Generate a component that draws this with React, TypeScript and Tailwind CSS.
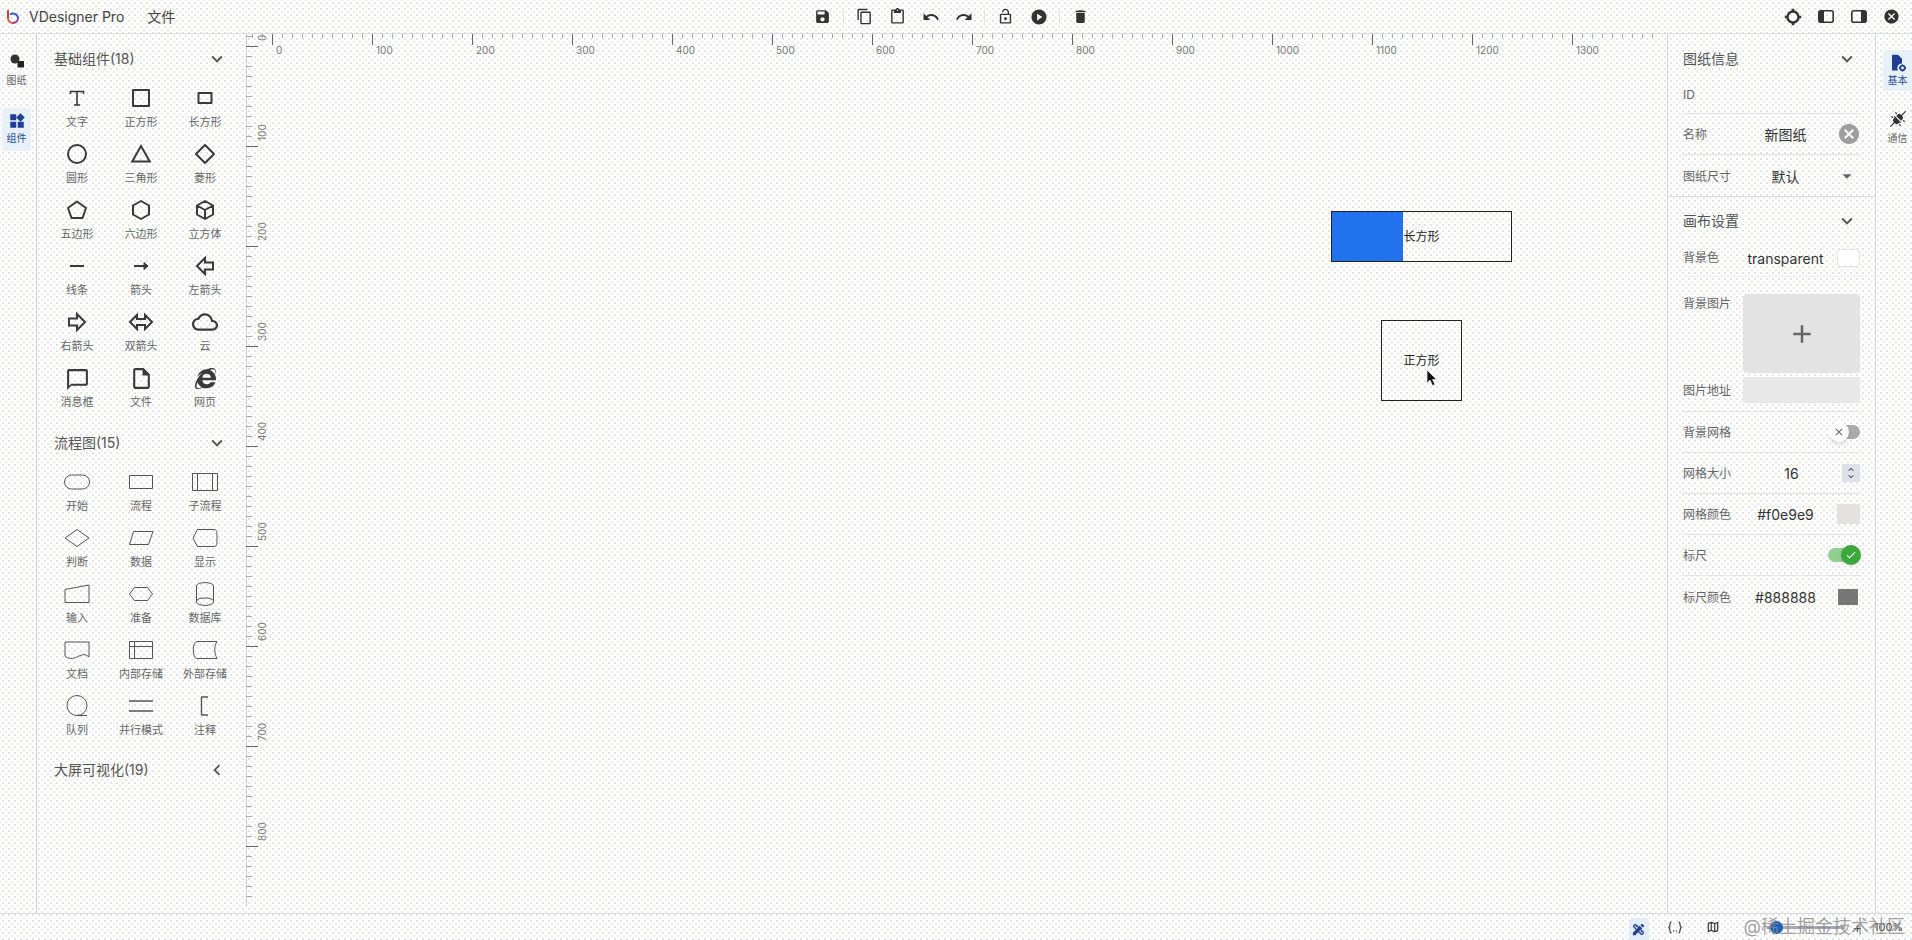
import React from "react";
import { MdSave, MdContentCopy, MdContentPaste, MdUndo, MdRedo, MdLockOpen, MdPlayCircle, MdDelete, MdExpandMore, MdChevronLeft, MdCancel, MdArrowDropDown, MdAdd, MdWidgets, MdCloudQueue, MdChatBubbleOutline, MdOutlineInsertDriveFile, MdDesignServices, MdOutlineMap, MdClose, MdCheck, MdKeyboardArrowUp, MdKeyboardArrowDown } from "react-icons/md";
import { FaInternetExplorer } from "react-icons/fa";
import { PiPlugsConnectedFill } from "react-icons/pi";

const S = ({ children, w = 28, sw = 2, stroke = "#3a3a3a" }: { children: React.ReactNode; w?: number; sw?: number; stroke?: string }) => (
  <svg width={w} height={28} viewBox={`0 0 ${w} 28`} fill="none" stroke={stroke} strokeWidth={sw} strokeLinejoin="round">{children}</svg>
);

const basic: [string, React.ReactNode][] = [
  ["文字", <S sw={1.6}><path d="M7.5 10V7.5h13V10M14 7.5v13.5M11 21h6" strokeLinejoin="miter" /></S>],
  ["正方形", <S><rect x="6" y="6" width="16" height="16" /></S>],
  ["长方形", <S><rect x="7.5" y="9" width="13" height="10" /></S>],
  ["圆形", <S><circle cx="14" cy="14" r="9" /></S>],
  ["三角形", <S><path d="M14 6 22.8 21.5H5.2Z" strokeLinejoin="miter" /></S>],
  ["菱形", <S><path d="M14 5 23 14 14 23 5 14Z" /></S>],
  ["五边形", <S><path d="M14 5.5 23 12 19.5 22H8.500L5 12Z" /></S>],
  ["六边形", <S><path d="M14 5 22 9.500V18.500L14 23 6 18.500V9.500Z" /></S>],
  ["立方体", <S><path d="M14 5 22 9.500V18.500L14 23 6 18.500V9.500ZM14 14 6 9.500M14 14 22 9.500M14 14V23" /></S>],
  ["线条", <S><path d="M7 14H21" /></S>],
  ["箭头", <S><path d="M7 14H19" /><path d="M17 10.500 21 14 17 17.500Z" fill="#3a3a3a" strokeWidth={1} /></S>],
  ["左箭头", <S><path d="M6 14 14 6V10.500H22V17.500H14V22Z" strokeLinejoin="miter" /></S>],
  ["右箭头", <S><path d="M22 14 14 6V10.500H6V17.500H14V22Z" strokeLinejoin="miter" /></S>],
  ["双箭头", <S><path d="M3 14 10 7V11H18V7L25 14 18 21V17H10V21Z" strokeLinejoin="miter" /></S>],
  ["云", <MdCloudQueue size={26} color="#3a3a3a" />],
  ["消息框", <MdChatBubbleOutline size={25} color="#3a3a3a" className="mt-[3px]" />],
  ["文件", <MdOutlineInsertDriveFile size={25} color="#3a3a3a" />],
  ["网页", <FaInternetExplorer size={21} color="#3a3a3a" />],
];

const T = ({ children }: { children: React.ReactNode }) => <S w={30} sw={1} stroke="#555">{children}</S>;
const flow: [string, React.ReactNode][] = [
  ["开始", <T><rect x="2.500" y="7" width="25" height="14" rx="7" /></T>],
  ["流程", <T><rect x="3.500" y="7.500" width="23" height="13" /></T>],
  ["子流程", <T><path d="M2.500 5.500h25v17h-25zM7.500 5.500v17M22.500 5.500v17" /></T>],
  ["判断", <T><path d="M3 14 15 5.500 27 14 15 22.500Z" /></T>],
  ["数据", <T><path d="M7.500 7.500H27L22.500 20.500H3.500Z" /></T>],
  ["显示", <T><path d="M7.500 5.500H24C27 5.500 27 8 27 14S27 22.500 24 22.500H7.500L3 14Z" /></T>],
  ["输入", <T><path d="M3 9.500 27 5V22.500H3Z" /></T>],
  ["准备", <T><path d="M3.500 14 8.500 7.500H21.500L26.500 14 21.500 20.500H8.500Z" /></T>],
  ["数据库", <T><path d="M6.500 6C6.500 1.500 23.500 1.500 23.500 6V22C23.500 26.500 6.500 26.500 6.500 22ZM6.500 21C6.500 17 23.500 17 23.500 21" /></T>],
  ["文档", <T><path d="M3 6H27V21C23 17 19 19 15 21S6 23 3 20Z" /></T>],
  ["内部存储", <T><path d="M3.500 5.500h23v17h-23zM3.500 10.500h23M8.500 5.500v17" /></T>],
  ["外部存储", <T><path d="M7 5.500H27C24 10 24 17 27 22.500H7C2 22.500 2 5.500 7 5.500Z" /></T>],
  ["队列", <T><circle cx="15" cy="13.500" r="10" /><path d="M15 23.500H25" /></T>],
  ["并行模式", <T><path d="M3 9H27M3 19H27" strokeWidth={1.4} /></T>],
  ["注释", <T><path d="M18 5H11.500V23H18" strokeWidth={1.4} /></T>],
];

const Grid = ({ items }: { items: [string, React.ReactNode][] }) => (
  <div className="ml-2 grid grid-cols-[64px_64px_64px] gap-y-[10px]">
    {items.map(([label, icon]) => (
      <div key={label} className="flex flex-col items-center">
        <div className="flex h-7 items-center justify-center">{icon}</div>
        <div className="mt-[2px] h-4 text-[11px] leading-4 text-[#666]">{label}</div>
      </div>
    ))}
  </div>
);

const Head = ({ title, open = true }: { title: string; open?: boolean }) => (
  <div className="flex h-[50px] items-center justify-between pl-[17px] pr-[18px] text-sm text-[#555]">
    <span>{title}</span>
    {open ? <MdExpandMore size={22} color="#555" /> : <MdChevronLeft size={22} color="#555" />}
  </div>
);

const ToolBtn = ({ children }: { children: React.ReactNode }) => (
  <div className="flex w-[33px] items-center justify-center">{children}</div>
);
const Sep = () => <div className="mx-1 h-4 w-px bg-[#e2e2e2]" />;
const PanelIcon = ({ right }: { right?: boolean }) => (
  <svg width="16" height="13" viewBox="0 0 16 13">
    <rect x="0.800" y="0.800" width="14.400" height="11.400" rx="2" fill="none" stroke="#333" strokeWidth="1.600" />
    <path d={right ? "M10 1h4a1 1 0 0 1 1 1v9a1 1 0 0 1-1 1h-4z" : "M6 1H2a1 1 0 0 0-1 1v9a1 1 0 0 0 1 1h4z"} fill="#333" />
  </svg>
);
const SunRing = () => (
  <svg width="18" height="18" viewBox="0 0 18 18" fill="none" stroke="#333">
    <circle cx="9" cy="9" r="5.500" strokeWidth="2.400" />
    <path d="M9 0.800V3M9 15V17.200M0.800 9H3M15 9H17.200" strokeWidth="2.600" />
  </svg>
);
const FileGear = () => (
  <svg width="18" height="18" viewBox="0 0 18 18" fill="#1e3f94">
    <path d="M3 1.500C3 1 3.400 0.800 3.800 0.800H9L13 4.800V9.500A4.500 4.500 0 0 0 9 16.500H3.800C3.400 16.500 3 16.200 3 15.700Z" />
    <circle cx="13.500" cy="14" r="2.300" fill="none" stroke="#1e3f94" strokeWidth="1.700" />
    <path d="M13.500 10.500V11.800M13.500 16.200V17.500M10 14H11.300M15.700 14H17" stroke="#1e3f94" strokeWidth="1.400" />
  </svg>
);
const Braces = () => (
  <svg width="14" height="13" viewBox="0 0 14 13" fill="none" stroke="#333" strokeWidth="1.100">
    <path d="M3.500 1C2 1 2 2 2 3.500S2 5.500 0.800 6.500C2 7.500 2 8 2 9.500S2 12 3.500 12" />
    <path d="M10.500 1C12 1 12 2 12 3.500S12 5.500 13.200 6.500C12 7.500 12 8 12 9.500S12 12 10.500 12" />
    <circle cx="5.500" cy="10" r="0.700" fill="#333" stroke="none" />
    <circle cx="8.500" cy="10" r="0.700" fill="#333" stroke="none" />
  </svg>
);

const Ruler = () => {
  const xs = Array.from({ length: 141 }, (_, i) => i - 2);
  const ys = Array.from({ length: 87 }, (_, i) => i - 1);
  return (
    <svg className="absolute left-0 top-0" width="1421" height="879" fontSize="10" fill="#777" fontFamily="Inter, sans-serif">
      <path d="M0.500 0V872" stroke="#cfcfd6" />
      {xs.map((i) => {
        const x = 26.5 + i * 10;
        const major = i % 10 === 0;
        return <path key={i} d={`M${x} 0V${major ? 11 : 4}`} stroke={major ? "#666" : "#aaa"} />;
      })}
      {ys.map((i) => {
        const y = 12.5 + i * 10;
        const major = i % 10 === 0;
        return <path key={i} d={`M0 ${y}H${major ? 12 : 6}`} stroke={major ? "#666" : "#aaa"} />;
      })}
      {Array.from({ length: 14 }, (_, i) => (
        <text key={i} x={26 + i * 100 + 4} y={20}>{i * 100}</text>
      ))}
      {Array.from({ length: 9 }, (_, i) => (
        <text key={i} transform={`translate(20 ${7 + i * 100}) rotate(-90)`}>{i * 100}</text>
      ))}
    </svg>
  );
};

const Row = ({ label, children, last }: { label: string; children?: React.ReactNode; last?: boolean }) => (
  <div className={`flex h-[41px] items-center ${last ? "" : "border-b border-[#e3e3e8]"}`}>
    <div className="w-[56px] pt-[2px] text-xs text-[#666]">{label}</div>
    {children}
  </div>
);
const Val = ({ children }: { children: React.ReactNode }) => (
  <div className="flex-1 pt-[2px] text-center text-sm text-[#333]">{children}</div>
);
const Ctl = ({ children }: { children?: React.ReactNode }) => (
  <div className="flex w-[28px] items-center justify-end">{children}</div>
);

export default function App() {
  return (
    <div className="flex h-[940px] w-[1912px] flex-col overflow-hidden bg-white bg-[radial-gradient(circle,#e3e3ea_0.8px,transparent_1px),radial-gradient(circle,#e9ede4_0.8px,transparent_1px)] bg-[length:6px_6px] bg-[position:0_0,3px_3px] [font-family:Inter,'Noto_Sans_CJK_SC',sans-serif]">
      {/* header */}
      <header className="flex h-[34px] shrink-0 items-center border-b border-[#d9d9e0]">
        <div className="flex w-[806px] items-center text-sm text-[#444]">
          <svg className="ml-[6px]" width="14" height="15" viewBox="0 0 14 15" fill="none" strokeWidth="2">
            <path d="M2 1V9" stroke="#c2492d" />
            <path d="M2 9A5 5 0 0 0 7 14" stroke="#e0572a" />
            <path d="M7 14A5 5 0 0 0 12 9" stroke="#a6309a" />
            <path d="M12 9A5 5 0 0 0 4 5.500" stroke="#2b5fd0" />
          </svg>
          <span className="ml-[9px]">VDesigner Pro</span>
          <span className="ml-[23px]">文件</span>
        </div>
        <div className="flex items-center text-[#333]">
          <ToolBtn><MdSave size={17} /></ToolBtn>
          <Sep />
          <ToolBtn><MdContentCopy size={17} /></ToolBtn>
          <ToolBtn><MdContentPaste size={17} /></ToolBtn>
          <ToolBtn><MdUndo size={18} /></ToolBtn>
          <ToolBtn><MdRedo size={18} /></ToolBtn>
          <Sep />
          <ToolBtn><MdLockOpen size={17} /></ToolBtn>
          <ToolBtn><MdPlayCircle size={18} /></ToolBtn>
          <Sep />
          <ToolBtn><MdDelete size={17} /></ToolBtn>
        </div>
        <div className="ml-auto flex items-center pr-1 text-[#333]">
          <ToolBtn><SunRing /></ToolBtn>
          <ToolBtn><PanelIcon /></ToolBtn>
          <ToolBtn><PanelIcon right /></ToolBtn>
          <ToolBtn><MdCancel size={17} /></ToolBtn>
        </div>
      </header>

      {/* main */}
      <div className="flex min-h-0 flex-1">
        <nav className="flex w-[37px] shrink-0 flex-col gap-[17px] border-r border-[#cfcfd8] pl-[2px] pt-[14px]">
          <div className="flex h-[43px] w-[29px] flex-col items-center pt-1 text-[#666]">
            <svg width="18" height="18" viewBox="0 0 18 18"><circle cx="7" cy="7" r="4.500" fill="#333" /><rect x="9.500" y="9" width="6.500" height="6.500" fill="#222" /></svg>
            <span className="mt-[3px] text-[10px] leading-[14px]">图纸</span>
          </div>
          <div className="flex h-[43px] w-[29px] flex-col items-center rounded bg-[#e8f1fa] pt-1 text-[#1f4e9c]">
            <MdWidgets size={18} color="#1e3f94" />
            <span className="mt-[1px] text-[10px] leading-[14px]">组件</span>
          </div>
        </nav>

        <aside className="w-[209px] shrink-0">
          <Head title="基础组件(18)" />
          <Grid items={basic} />
          <div className="h-2" />
          <Head title="流程图(15)" />
          <Grid items={flow} />
          <div className="h-[7px]" />
          <Head title="大屏可视化(19)" open={false} />
        </aside>

        <main className="relative min-w-0 flex-1">
          <Ruler />
          <div className="absolute left-[1085px] top-[177px] flex h-[51px] w-[181px] items-center justify-center border border-[#222] text-xs text-[#222]">
            <div className="absolute bottom-0 left-0 top-0 w-[71px] bg-[#2272ee]" />
            <span>长方形</span>
          </div>
          <div className="absolute left-[1135px] top-[286px] flex h-[81px] w-[81px] items-center justify-center border border-[#222] text-xs text-[#222]">
            <span>正方形</span>
          </div>
          <svg className="absolute left-[1179px] top-[334px]" width="14" height="20" viewBox="0 0 14 20">
            <path d="M2 2V15L5 12L7.500 17.500L10 16.500L7.500 11.500H11.500Z" fill="#111" stroke="#ddd" strokeWidth="0.800" />
          </svg>
        </main>

        <section className="w-[209px] shrink-0 border-x border-[#d5d5dc] px-[15px]">
          <div className="flex h-[41px] items-center justify-between pt-[9px] text-sm text-[#555]">
            <span>图纸信息</span>
            <MdExpandMore size={22} color="#555" className="mr-[2px]" />
          </div>
          <div className="flex h-[39px] items-center border-b border-[#e3e3e8] pt-[2px] text-xs text-[#666]">ID</div>
          <Row label="名称">
            <Val>新图纸</Val>
            <Ctl><MdCancel size={24} color="#9e9e9e" className="-mr-[1px]" /></Ctl>
          </Row>
          <Row label="图纸尺寸" last>
            <Val>默认</Val>
            <Ctl><MdArrowDropDown size={22} color="#666" className="mr-[2px]" /></Ctl>
          </Row>
          <div className="-mx-[15px] h-px bg-[#dcdce2]" />
          <div className="flex h-[48px] items-center justify-between text-sm text-[#555]">
            <span>画布设置</span>
            <MdExpandMore size={22} color="#555" className="mr-[2px]" />
          </div>
          <div className="flex h-[32px] items-center border-b border-[#efeff2] pb-[6px]">
            <div className="w-[56px] text-xs text-[#666]">背景色</div>
            <Val>transparent</Val>
            <Ctl><div className="h-[18px] w-[23px] rounded-sm border border-[#e5e5e5] bg-white" /></Ctl>
          </div>
          <div className="h-[135px] border-b border-[#e3e3e8] pt-[17px]">
            <div className="flex items-start">
              <div className="w-[60px] pt-[2px] text-xs text-[#666]">背景图片</div>
              <div className="flex h-[79px] flex-1 items-center justify-center rounded-sm bg-[#e3e3e3]">
                <MdAdd size={30} color="#666" />
              </div>
            </div>
            <div className="mt-1 flex items-center">
              <div className="w-[60px] pt-[2px] text-xs text-[#666]">图片地址</div>
              <div className="h-[26px] flex-1 bg-[#e8e8e8]" />
            </div>
          </div>
          <Row label="背景网格">
            <div className="flex-1" />
            <div className="relative h-[14px] w-[26px] rounded-full bg-[#aaa]">
              <div className="absolute -left-[5px] -top-[3px] flex h-5 w-5 items-center justify-center rounded-full bg-white shadow-md">
                <MdClose size={12} color="#666" />
              </div>
            </div>
          </Row>
          <Row label="网格大小">
            <div className="flex-1 pl-3 pt-[2px] text-center text-sm text-[#333]">16</div>
            <Ctl>
              <div className="flex h-[18px] w-[18px] flex-col items-center justify-center bg-[#e0e0ea] text-[#444]">
                <MdKeyboardArrowUp size={12} className="-mb-[2px]" />
                <MdKeyboardArrowDown size={12} className="-mt-[2px]" />
              </div>
            </Ctl>
          </Row>
          <Row label="网格颜色">
            <Val>#f0e9e9</Val>
            <Ctl><div className="h-5 w-[23px] bg-[#e4e1e1]" /></Ctl>
          </Row>
          <Row label="标尺">
            <div className="flex-1" />
            <div className="relative h-[14px] w-[32px] rounded-full bg-[#8fcf90]">
              <div className="absolute -right-[1px] -top-[3px] flex h-5 w-5 items-center justify-center rounded-full bg-[#3aa83c] shadow">
                <MdCheck size={12} color="#fff" />
              </div>
            </div>
          </Row>
          <Row label="标尺颜色" last>
            <Val>#888888</Val>
            <Ctl><div className="mr-[2px] h-4 w-5 bg-[#777]" /></Ctl>
          </Row>
        </section>

        <nav className="flex w-[36px] shrink-0 flex-col items-end pt-4">
          <div className="flex h-[41px] w-[29px] flex-col items-center rounded-l bg-[#e8f1fa] pt-1 text-[#1f4e9c]">
            <FileGear />
            <span className="mt-[1px] text-[10px] leading-[14px]">基本</span>
          </div>
          <div className="mt-[19px] flex h-[41px] w-[29px] flex-col items-center text-[#666]">
            <PiPlugsConnectedFill size={18} color="#333" />
            <span className="mt-[3px] text-[10px] leading-[14px]">通信</span>
          </div>
        </nav>
      </div>

      {/* status */}
      <footer className="relative flex h-[27px] shrink-0 items-center justify-end border-t border-[#d9d9e0] pr-[7px]">
        <div className="flex h-[22px] w-5 items-center justify-center self-end rounded-t bg-[#e3edf8]">
          <MdDesignServices size={15} color="#1e3f94" />
        </div>
        <div className="ml-4 flex w-5 justify-center"><Braces /></div>
        <div className="ml-[18px] flex w-5 justify-center"><MdOutlineMap size={14} color="#333" /></div>
        <div className="relative ml-[44px] mr-[8px] h-[3px] w-[78px] bg-[#aab]">
          <div className="absolute left-[3px] -top-[5px] h-[13px] w-[13px] rounded-full bg-[#1a62b8]" />
        </div>
        <span className="text-sm text-[#333]">+</span>
        <span className="ml-3 w-[31px] text-[11px] text-[#444]">100%</span>
        <div className="absolute right-[7px] top-[1px] text-lg leading-[24px] text-[#8a8a8a]/80">@稀土掘金技术社区</div>
      </footer>
    </div>
  );
}
